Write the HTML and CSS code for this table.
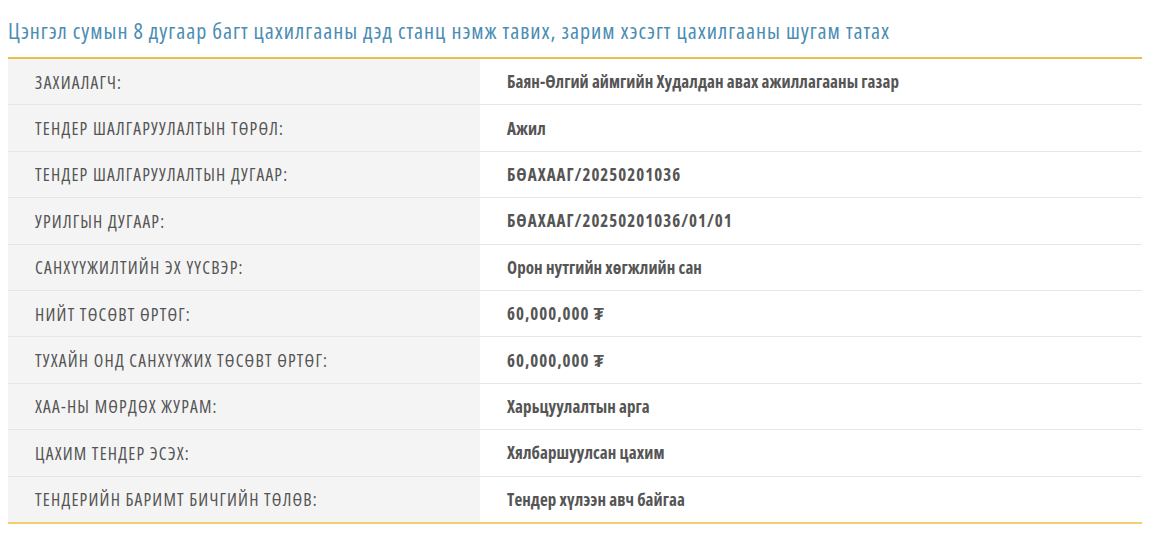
FILE: index.html
```html
<!DOCTYPE html>
<html lang="mn">
<head>
<meta charset="utf-8">
<link rel="stylesheet" href="styles.css">
</head>
<body>
<h1 class="title">Цэнгэл сумын 8 дугаар багт цахилгааны дэд станц нэмж тавих, зарим хэсэгт цахилгааны шугам татах</h1>
<table class="info">
<tbody>
<tr><th>ЗАХИАЛАГЧ:</th><td>Баян-Өлгий аймгийн Худалдан авах ажиллагааны газар</td></tr>
<tr><th>ТЕНДЕР ШАЛГАРУУЛАЛТЫН ТӨРӨЛ:</th><td>Ажил</td></tr>
<tr><th>ТЕНДЕР ШАЛГАРУУЛАЛТЫН ДУГААР:</th><td class="num">БӨАХААГ/20250201036</td></tr>
<tr><th>УРИЛГЫН ДУГААР:</th><td class="num">БӨАХААГ/20250201036/01/01</td></tr>
<tr><th>САНХҮҮЖИЛТИЙН ЭХ ҮҮСВЭР:</th><td>Орон нутгийн хөгжлийн сан</td></tr>
<tr><th>НИЙТ ТӨСӨВТ ӨРТӨГ:</th><td class="num">60,000,000 ₮</td></tr>
<tr><th>ТУХАЙН ОНД САНХҮҮЖИХ ТӨСӨВТ ӨРТӨГ:</th><td class="num">60,000,000 ₮</td></tr>
<tr><th>ХАА-НЫ МӨРДӨХ ЖУРАМ:</th><td>Харьцуулалтын арга</td></tr>
<tr><th>ЦАХИМ ТЕНДЕР ЭСЭХ:</th><td>Хялбаршуулсан цахим</td></tr>
<tr><th>ТЕНДЕРИЙН БАРИМТ БИЧГИЙН ТӨЛӨВ:</th><td>Тендер хүлээн авч байгаа</td></tr>
</tbody>
</table>
</body>
</html>
```
FILE: styles.css
```css
html, body {
  margin: 0;
  padding: 0;
  background: #fff;
}
body {
  padding: 0 11px 0 8px;
  font-family: "Open Sans", "Liberation Sans", sans-serif;
  font-stretch: 75%;
  color: #555;
}
.title {
  margin: 0;
  padding: 16px 0 13px 0;
  font-size: 22px;
  line-height: 28px;
  font-weight: 400;
  letter-spacing: 0.97px;
  color: #4b8db3;
  border-bottom: 2px solid #e9c14a;
}
.info {
  width: 100%;
  border-collapse: collapse;
  border-bottom: 2px solid #f0cf6e;
}
.info th, .info td {
  height: 45.4px;
  padding: 0 0 0 27px;
  font-size: 17px;
  text-align: left;
  vertical-align: middle;
  border-top: 1px solid #e6e6e6;
}
.info tr:first-child th, .info tr:first-child td {
  border-top: none;
}
.info th {
  width: 445px;
  background: #f4f4f4;
  font-weight: 400;
  font-size: 17.5px;
  letter-spacing: 1.2px;
  color: #555;
}
.info td {
  font-weight: 700;
  letter-spacing: 0.08px;
  color: #555;
}
.info td.num {
  letter-spacing: 1px;
}
```
